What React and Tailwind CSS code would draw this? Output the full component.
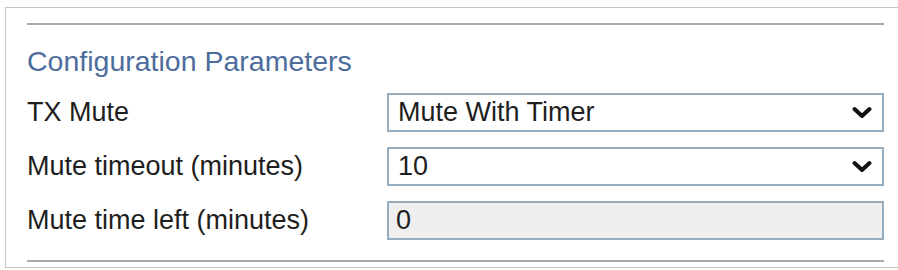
import React from "react";

function Chevron() {
  return (
    <svg
      className="pointer-events-none absolute right-[12px] top-1/2 -translate-y-1/2"
      width="20"
      height="13"
      viewBox="0 0 20 13"
      fill="none"
    >
      <path d="M2.5 2.5 L10 9.5 L17.5 2.5" stroke="#111" strokeWidth="4" strokeLinecap="round" strokeLinejoin="round" />
    </svg>
  );
}

function SelectField({ value, options }) {
  return (
    <div className="relative w-[497px] h-[39px]">
      <select
        defaultValue={value}
        className="appearance-none w-full h-full border-2 border-[#97acbd] bg-white pl-[9px] pr-10 text-[27px] leading-none text-[#1e1e1e] outline-none"
        style={{ fontFamily: '"Liberation Sans", Arial, sans-serif' }}
      >
        {options.map((o) => (
          <option key={o} value={o}>
            {o}
          </option>
        ))}
      </select>
      <Chevron />
    </div>
  );
}

function Row({ label, children }) {
  return (
    <div className="flex items-center">
      <div className="w-[360px] text-[27px] leading-none text-[#1e1e1e]">{label}</div>
      {children}
    </div>
  );
}

export default function App() {
  return (
    <div
      className="w-[898px] h-[270px] bg-white pt-[7px] pl-[5px] overflow-hidden"
      style={{ fontFamily: '"Liberation Sans", Arial, sans-serif' }}
    >
      <div className="w-[920px] h-[261px] border-l border-t border-b border-[#c6c6c6] pl-[21px] pt-[15px]">
        <div className="w-[857px]">
          <div className="h-[2px] bg-[#a9a9a9]" />
          <h2 className="mt-[20px] text-[28.5px] leading-[32px] text-[#4d6d9c] font-normal">
            Configuration Parameters
          </h2>
          <div className="mt-[16px] flex flex-col gap-[15px]">
            <Row label="TX Mute">
              <SelectField value="Mute With Timer" options={["Mute With Timer", "Mute", "Unmute"]} />
            </Row>
            <Row label="Mute timeout (minutes)">
              <SelectField value="10" options={["5", "10", "15", "30", "60"]} />
            </Row>
            <Row label="Mute time left (minutes)">
              <input
                readOnly
                value="0"
                className="w-[497px] h-[39px] border-2 border-[#97acbd] bg-[#efefef] pl-[7px] text-[27px] leading-none text-[#1e1e1e] outline-none"
                style={{ fontFamily: '"Liberation Sans", Arial, sans-serif' }}
              />
            </Row>
          </div>
          <div className="mt-[20px] h-[2px] bg-[#a9a9a9]" />
        </div>
      </div>
    </div>
  );
}
